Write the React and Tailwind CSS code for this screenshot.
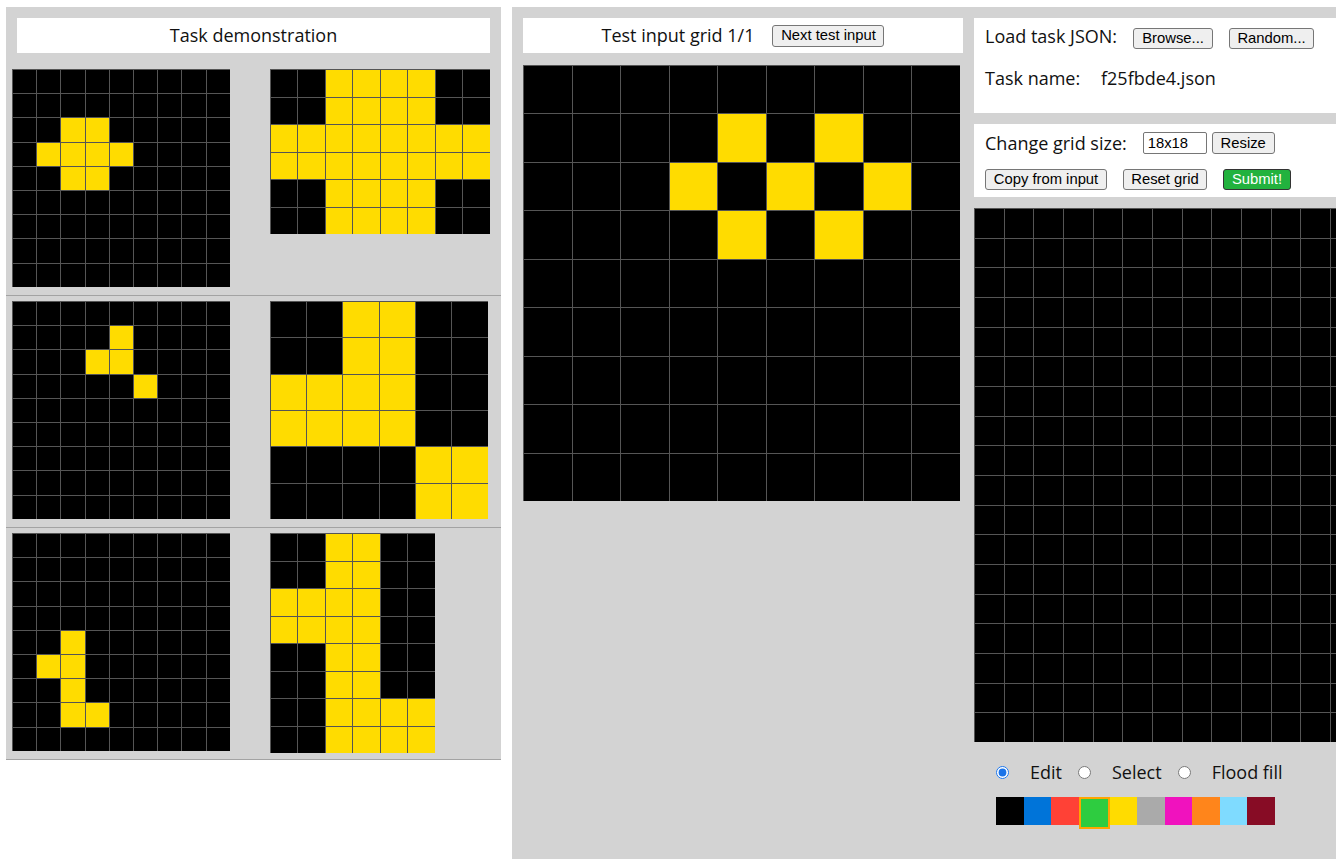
const K = 0;
const Y = 4;

const PALETTE = [
  "#000000",
  "#0074D9",
  "#FF4136",
  "#2ECC40",
  "#FFDC00",
  "#AAAAAA",
  "#F012BE",
  "#FF851B",
  "#7FDBFF",
  "#870C25",
];

function makeGrid(rows, cols, yellow) {
  const g = Array.from({ length: rows }, () => Array(cols).fill(K));
  yellow.forEach(([r, c]) => {
    g[r][c] = Y;
  });
  return g;
}

function block(rows, cols, spans) {
  // spans: [r0, r1, c0, c1] inclusive ranges painted yellow
  const cells = [];
  spans.forEach(([r0, r1, c0, c1]) => {
    for (let r = r0; r <= r1; r++) for (let c = c0; c <= c1; c++) cells.push([r, c]);
  });
  return makeGrid(rows, cols, cells);
}

const pairs = [
  {
    input: makeGrid(9, 9, [[2, 2], [2, 3], [3, 1], [3, 2], [3, 3], [3, 4], [4, 2], [4, 3]]),
    output: block(6, 8, [[0, 1, 2, 5], [2, 3, 0, 7], [4, 5, 2, 5]]),
    cell: 27.5,
  },
  {
    input: makeGrid(9, 9, [[1, 4], [2, 3], [2, 4], [3, 5]]),
    output: block(6, 6, [[0, 1, 2, 3], [2, 3, 0, 3], [4, 5, 4, 5]]),
    cell: 36.33,
  },
  {
    input: makeGrid(9, 9, [[4, 2], [5, 1], [5, 2], [6, 2], [7, 2], [7, 3]]),
    output: block(8, 6, [[0, 1, 2, 3], [2, 3, 0, 3], [4, 5, 2, 3], [6, 7, 2, 5]]),
    cell: 27.5,
  },
];

const testInput = makeGrid(9, 9, [[1, 4], [1, 6], [2, 3], [2, 5], [2, 7], [3, 4], [3, 6]]);
const outputGrid = makeGrid(18, 18, []);

function Grid({ data, cell, cellH }) {
  const h = cellH ?? cell;
  return (
    <div className="flex flex-col shrink-0">
      {data.map((row, r) => (
        <div key={r} className="flex">
          {row.map((v, c) => (
            <div
              key={c}
              className="border-l border-t border-[#555555] box-border shrink-0"
              style={{ width: cell, height: h, backgroundColor: PALETTE[v] }}
            />
          ))}
        </div>
      ))}
    </div>
  );
}

function Btn({ children, className = "" }) {
  return (
    <button
      className={`flex items-center justify-center bg-[#efefef] border border-[#767676] rounded-[3px] text-[14.8px] text-black font-['Liberation_Sans',Arial,sans-serif] leading-none ${className}`}
    >
      {children}
    </button>
  );
}

export default function App() {
  return (
    <div className="w-[1336px] h-[859px] overflow-hidden bg-white flex items-start pt-[7px] font-['Open_Sans',sans-serif] text-[#111]">
      {/* left: demonstration pairs */}
      <div className="ml-[6px] w-[495px] shrink-0 bg-[#d3d3d3] flex flex-col">
        <div className="mx-[11px] mt-[11px] h-[35px] bg-white flex items-center justify-center text-[18px]">
          Task demonstration
        </div>
        <div className="mt-[11px] flex flex-col">
          {pairs.map((p, i) => (
            <div key={i} className="h-[232px] border-b border-[#a3a3a3] flex items-start pt-[5px]">
              <div className="ml-[6px]">
                <Grid data={p.input} cell={24.2} cellH={24.2} />
              </div>
              <div className="ml-[40px]">
                <Grid data={p.output} cell={p.cell} />
              </div>
            </div>
          ))}
        </div>
      </div>

      {/* right: test area */}
      <div className="ml-[11px] h-[852px] flex-1 bg-[#d3d3d3] flex items-start gap-[11px] pt-[11px] pl-[11px]">
        <div className="w-[440px] shrink-0 flex flex-col">
          <div className="h-[35px] bg-white flex items-center justify-center text-[18px]">
            <span>Test input grid 1/1</span>
            <Btn className="ml-[18px] w-[112px] h-[22px]">Next test input</Btn>
          </div>
          <div className="mt-[12px]">
            <Grid data={testInput} cell={48.55} cellH={48.45} />
          </div>
        </div>

        <div className="w-[534px] shrink-0 flex flex-col">
          <div className="h-[95px] bg-white pl-[11px] text-[18px]">
            <div className="mt-[9px] h-[22px] flex items-center">
              <span className="mb-[4px]">Load task JSON:</span>
              <Btn className="ml-[16px] w-[80px] h-[21px]">Browse...</Btn>
              <Btn className="ml-[16px] w-[85px] h-[21px]">Random...</Btn>
            </div>
            <div className="mt-[18px] h-[22px] flex items-center">
              <span className="w-[116px]">Task name:</span>
              <span>f25fbde4.json</span>
            </div>
          </div>

          <div className="mt-[11px] h-[73px] bg-white pl-[11px] text-[18px]">
            <div className="mt-[8px] h-[22px] flex items-center">
              <span>Change grid size:</span>
              <input
                readOnly
                value="18x18"
                className="ml-[16px] w-[64px] h-[22px] border border-[#767676] rounded-[2px] px-[4px] text-[14.8px] font-['Liberation_Sans',Arial,sans-serif] text-black bg-white"
              />
              <Btn className="ml-[5px] w-[63px] h-[22px]">Resize</Btn>
            </div>
            <div className="mt-[15px] h-[21px] flex items-center">
              <Btn className="w-[122px] h-[21px]">Copy from input</Btn>
              <Btn className="ml-[16px] w-[84px] h-[21px]">Reset grid</Btn>
              <button className="ml-[16px] w-[68px] h-[21px] flex items-center justify-center bg-[#22b23e] border border-[#333] rounded-[3px] text-white text-[14.8px] font-['Liberation_Sans',Arial,sans-serif] leading-none">
                Submit!
              </button>
            </div>
          </div>

          <div className="mt-[11px]">
            <Grid data={outputGrid} cell={29.67} />
          </div>

          <div className="mt-[19px] h-[24px] pl-[22px] flex items-center text-[18px]">
            <input type="radio" name="mode" defaultChecked className="m-0 w-[13px] h-[13px] accent-[#1a73e8]" />
            <span className="ml-[21px]">Edit</span>
            <input type="radio" name="mode" className="ml-[16px] m-0 w-[13px] h-[13px]" />
            <span className="ml-[21px]">Select</span>
            <input type="radio" name="mode" className="ml-[16px] m-0 w-[13px] h-[13px]" />
            <span className="ml-[21px]">Flood fill</span>
          </div>

          <div className="mt-[12px] pl-[22px] flex items-start">
            {PALETTE.map((c, i) =>
              i === 3 ? (
                <div
                  key={i}
                  className="w-[31px] h-[32px] border-2 border-[#ffa500] box-border shrink-0"
                  style={{ backgroundColor: c }}
                />
              ) : (
                <div key={i} className="w-[27.5px] h-[28px] shrink-0" style={{ backgroundColor: c }} />
              )
            )}
          </div>
        </div>
      </div>
    </div>
  );
}
